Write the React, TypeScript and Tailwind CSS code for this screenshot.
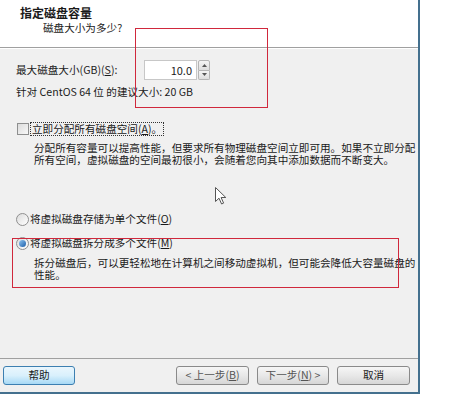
import React from "react";

// VMware "新建虚拟机向导" page: 指定磁盘容量, with two red annotation boxes drawn over it.

const font = {
  fontFamily: '"Noto Sans CJK SC", "Noto Sans", "Liberation Sans", sans-serif',
};

function Acc({ k }: { k: string }) {
  return (
    <>
      (<span className="underline underline-offset-1">{k}</span>)
    </>
  );
}

function Radio({ checked }: { checked?: boolean }) {
  return (
    <span className="flex h-[13px] w-[13px] shrink-0 items-center justify-center rounded-full border border-[#8f8f8f] bg-gradient-to-br from-[#dcdcdc] to-[#ffffff]">
      {checked && (
        <span className="h-[7px] w-[7px] rounded-full bg-gradient-to-br from-[#8fc6f2] to-[#1a5ea8]" />
      )}
    </span>
  );
}

function Btn({
  children,
  primary,
  dim,
  className = "",
}: {
  children: React.ReactNode;
  primary?: boolean;
  dim?: boolean;
  className?: string;
}) {
  return (
    <button
      className={
        "flex h-[19px] items-center justify-center rounded-[3px] border text-[10.6px] leading-none " +
        (primary
          ? "border-[#3c7fb1] bg-gradient-to-b from-[#eaf6fd] via-[#d9f0fc] to-[#a7d9f5] "
          : "border-[#8a8a8a] bg-gradient-to-b from-[#f6f6f6] via-[#e8e8e8] to-[#d6d6d6] ") +
        (dim ? "text-[#555] " : "text-[#1a1a1a] ") +
        className
      }
    >
      {children}
    </button>
  );
}

export default function App() {
  return (
    <div className="relative h-[404px] w-[454px] overflow-hidden bg-white text-[#1a1a1a]" style={font}>
      <div className="flex h-[394px] w-[420px] flex-col border-b-2 border-r-2 border-[#44708e]">
        {/* header */}
        <div className="h-[47px] shrink-0 bg-white">
          <div className="pl-[20px] pt-[6px] text-[12px] font-bold leading-[14px]">指定磁盘容量</div>
          <div className="pl-[43px] pt-[1px] text-[10.6px] leading-[14px]">磁盘大小为多少?</div>
        </div>
        <div className="h-px shrink-0 bg-[#a0a0a0]" />
        <div className="h-px shrink-0 bg-white" />

        {/* body */}
        <div className="relative flex-1 bg-[#f0f0f0] pl-[16px] text-[10.6px] leading-[12px]">
          <div className="mt-[11px] flex h-[20px] items-center">
            <span className="w-[128px]">
              最大磁盘大小(GB)<Acc k="S" />:
            </span>
            <div className="flex h-[20px] items-stretch">
              <div className="flex w-[53px] items-center justify-end border border-[#c7c7c7] bg-white pr-[4px] text-[11px]">
                10.0
              </div>
              <div className="ml-[1px] flex w-[12px] flex-col">
                <div className="flex flex-1 items-center justify-center rounded-t-[2px] border border-[#b5b5b5] bg-gradient-to-b from-[#f4f4f4] to-[#dedede]">
                  <svg width="5" height="3" viewBox="0 0 5 3"><path d="M2.5 0L5 3H0z" fill="#555" /></svg>
                </div>
                <div className="flex flex-1 items-center justify-center rounded-b-[2px] border border-t-0 border-[#b5b5b5] bg-gradient-to-b from-[#f4f4f4] to-[#dedede]">
                  <svg width="5" height="3" viewBox="0 0 5 3"><path d="M0 0H5L2.5 3z" fill="#555" /></svg>
                </div>
              </div>
            </div>
          </div>
          <div className="mt-[6px]">针对 CentOS 64 位 的建议大小: 20 GB</div>

          <div className="mt-[24px] flex h-[14px] items-center">
            <span className="ml-[1px] h-[12px] w-[12px] border border-[#8e8f8f] bg-gradient-to-br from-[#dcdcdc] to-[#f8f8f8]" />
            <span className="ml-[1px] flex h-[14px] items-center border border-dotted border-[#333] px-[1px]">
              立即分配所有磁盘空间<Acc k="A" />。
            </span>
          </div>
          <div className="mt-[6px] pl-[18px]">
            <div className="h-[12px]">分配所有容量可以提高性能，但要求所有物理磁盘空间立即可用。如果不立即分配</div>
            <div className="h-[12px]">所有空间，虚拟磁盘的空间最初很小，会随着您向其中添加数据而不断变大。</div>
          </div>

          <div className="mt-[46px] flex h-[14px] items-center gap-[1px]">
            <Radio />
            <span>
              将虚拟磁盘存储为单个文件<Acc k="O" />
            </span>
          </div>
          <div className="mt-[10px] flex h-[14px] items-center gap-[1px]">
            <Radio checked />
            <span>
              将虚拟磁盘拆分成多个文件<Acc k="M" />
            </span>
          </div>
          <div className="mt-[7px] pl-[18px]">
            <div className="h-[12px]">拆分磁盘后，可以更轻松地在计算机之间移动虚拟机，但可能会降低大容量磁盘的</div>
            <div className="h-[12px]">性能。</div>
          </div>

          {/* mouse pointer */}
          <svg className="absolute left-[215px] top-[138px]" width="12" height="18" viewBox="0 0 12 18">
            <path d="M0.5 0.5V14.5L4 11.2L6.6 17L8.6 16.1L6.1 10.5H10.8Z" fill="#fff" stroke="#555" strokeWidth="1" strokeLinejoin="round" />
          </svg>
        </div>

        {/* footer */}
        <div className="h-px shrink-0 bg-[#a0a0a0]" />
        <div className="flex h-[33px] shrink-0 items-start bg-[#f0f0f0] pl-[3px] pr-[8px] pt-[7px] text-[10.6px]">
          <Btn primary className="w-[72px]">帮助</Btn>
          <div className="ml-auto flex gap-[8px]">
            <Btn dim className="w-[73px]">
              &lt; 上一步<Acc k="B" />
            </Btn>
            <Btn dim className="w-[72px]">
              下一步<Acc k="N" /> &gt;
            </Btn>
            <Btn className="w-[73px]">取消</Btn>
          </div>
        </div>
      </div>

      {/* red annotation boxes */}
      <div className="pointer-events-none absolute left-[135px] top-[28px] h-[80px] w-[133px] border border-[#d0283c]" />
      <div className="pointer-events-none absolute left-[12px] top-[238px] h-[50px] w-[387px] border border-[#d0283c]" />
    </div>
  );
}
